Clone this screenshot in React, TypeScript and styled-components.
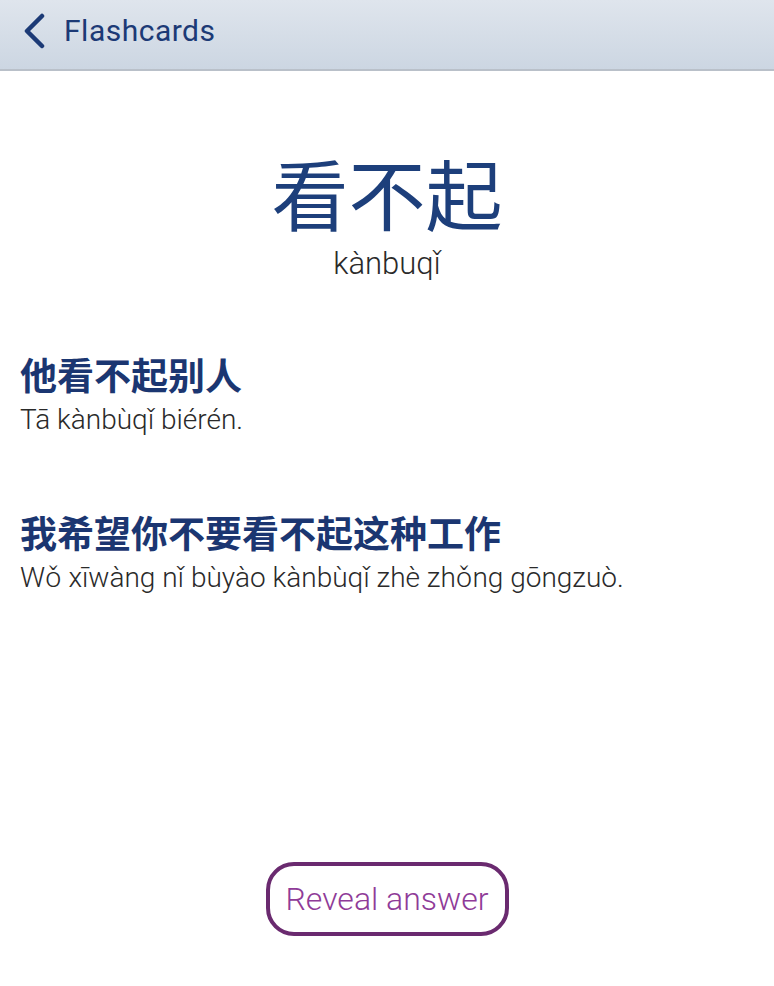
import React from "react";
import styled, { createGlobalStyle } from "styled-components";

const Global = createGlobalStyle`
  html, body { margin: 0; padding: 0; background: #ffffff; }
  body { font-family: Roboto, "Noto Sans", "Noto Sans CJK SC", sans-serif; }
`;

const Page = styled.div`
  width: 774px;
  height: 986px;
  display: flex;
  flex-direction: column;
  background: #ffffff;
  overflow: hidden;
`;

const NavBar = styled.header`
  height: 71px;
  box-sizing: border-box;
  flex: none;
  display: flex;
  align-items: center;
  gap: 18px;
  padding: 0 0 8px 22px;
  background: linear-gradient(#dfe5ed, #ccd6e2);
  border-bottom: 2px solid #b9c0c9;
`;

const BackLabel = styled.span`
  font-family: Roboto, "Noto Sans", sans-serif;
  font-size: 30px;
  color: #1c3a76;
  letter-spacing: 0.5px;
`;

const Content = styled.main`
  flex: 1;
  display: flex;
  flex-direction: column;
`;

const Headword = styled.section`
  display: flex;
  flex-direction: column;
  align-items: center;
  gap: 5px;
  padding-top: 73px;
`;

const Hanzi = styled.div`
  font-family: "Noto Sans CJK SC", sans-serif;
  font-weight: 400;
  font-size: 77px;
  line-height: 96px;
  color: #1d3f7b;
`;

const Pinyin = styled.div<{ $size: number }>`
  font-family: Roboto, "Noto Sans", sans-serif;
  font-weight: 300;
  font-size: ${(p) => p.$size}px;
  line-height: 38px;
  color: #2a2a2a;
`;

const Examples = styled.section`
  display: flex;
  flex-direction: column;
  gap: 70px;
  padding: 68px 20px 0;
`;

const Example = styled.div`
  display: flex;
  flex-direction: column;
  gap: 4px;
`;

const Sentence = styled.div`
  font-family: "Noto Sans CJK SC", sans-serif;
  font-weight: 700;
  font-size: 37px;
  line-height: 46px;
  color: #1b3671;
`;

const Footer = styled.div`
  margin-top: auto;
  display: flex;
  justify-content: center;
  padding-bottom: 50px;
`;

const RevealButton = styled.button`
  width: 243px;
  height: 74px;
  border: 4px solid #6a2a6f;
  border-radius: 28px;
  background: #ffffff;
  color: #8f3b98;
  font-family: Roboto, "Noto Sans", sans-serif;
  font-weight: 300;
  font-size: 32px;
  cursor: pointer;
`;

const Chevron = () => (
  <svg width="24" height="36" viewBox="0 0 24 36" fill="none">
    <path d="M20 3 L5 18 L20 33" stroke="#1c3a76" strokeWidth="4.5" strokeLinecap="round" strokeLinejoin="round" />
  </svg>
);

const examples = [
  { zh: "他看不起别人", py: "Tā kànbùqǐ biérén." },
  { zh: "我希望你不要看不起这种工作", py: "Wǒ xīwàng nǐ bùyào kànbùqǐ zhè zhǒng gōngzuò." },
];

export default function App() {
  return (
    <>
      <Global />
      <Page>
        <NavBar>
          <Chevron />
          <BackLabel>Flashcards</BackLabel>
        </NavBar>
        <Content>
          <Headword>
            <Hanzi>看不起</Hanzi>
            <Pinyin $size={31}>kànbuqǐ</Pinyin>
          </Headword>
          <Examples>
            {examples.map((e) => (
              <Example key={e.zh}>
                <Sentence>{e.zh}</Sentence>
                <Pinyin $size={28}>{e.py}</Pinyin>
              </Example>
            ))}
          </Examples>
          <Footer>
            <RevealButton>Reveal answer</RevealButton>
          </Footer>
        </Content>
      </Page>
    </>
  );
}
